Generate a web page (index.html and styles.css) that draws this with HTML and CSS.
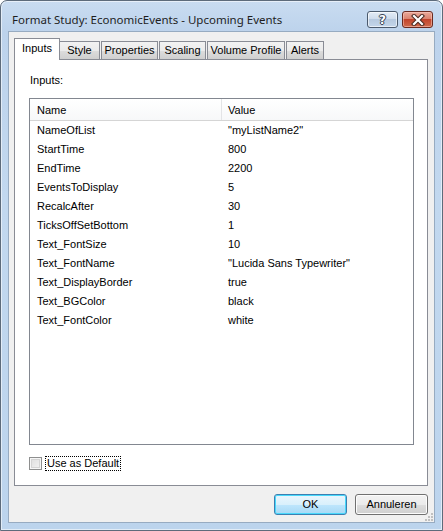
FILE: index.html
```html
<!DOCTYPE html>
<html>
<head>
<meta charset="utf-8">
<link rel="stylesheet" href="styles.css">
</head>
<body>
<div class="window">
  <div class="titlebar">
    <div class="title">Format Study: EconomicEvents - Upcoming Events</div>
    <div class="caption-buttons">
      <div class="cap-btn help"><span>?</span></div>
      <div class="cap-btn close">
        <svg width="18" height="12" viewBox="0 0 18 12">
          <path d="M5 2 L13 10 M13 2 L5 10" stroke="#4a2a22" stroke-width="4.2" stroke-linecap="square" fill="none"/>
          <path d="M5 2 L13 10 M13 2 L5 10" stroke="#ffffff" stroke-width="2.2" stroke-linecap="square" fill="none"/>
        </svg>
      </div>
    </div>
  </div>
  <div class="client">
    <div class="tabs">
      <div class="tab selected w-inputs">Inputs</div>
      <div class="tab w-style">Style</div>
      <div class="tab w-props">Properties</div>
      <div class="tab w-scaling">Scaling</div>
      <div class="tab w-vp">Volume Profile</div>
      <div class="tab w-alerts">Alerts</div>
    </div>
    <div class="panel">
      <div class="panel-label">Inputs:</div>
      <div class="listbox">
        <div class="row header">
          <div class="c-name">Name</div>
          <div class="c-value">Value</div>
        </div>
        <div class="row"><div class="c-name">NameOfList</div><div class="c-value">"myListName2"</div></div>
        <div class="row"><div class="c-name">StartTime</div><div class="c-value">800</div></div>
        <div class="row"><div class="c-name">EndTime</div><div class="c-value">2200</div></div>
        <div class="row"><div class="c-name">EventsToDisplay</div><div class="c-value">5</div></div>
        <div class="row"><div class="c-name">RecalcAfter</div><div class="c-value">30</div></div>
        <div class="row"><div class="c-name">TicksOffSetBottom</div><div class="c-value">1</div></div>
        <div class="row"><div class="c-name">Text_FontSize</div><div class="c-value">10</div></div>
        <div class="row"><div class="c-name">Text_FontName</div><div class="c-value">"Lucida Sans Typewriter"</div></div>
        <div class="row"><div class="c-name">Text_DisplayBorder</div><div class="c-value">true</div></div>
        <div class="row"><div class="c-name">Text_BGColor</div><div class="c-value">black</div></div>
        <div class="row"><div class="c-name">Text_FontColor</div><div class="c-value">white</div></div>
      </div>
      <div class="checkline">
        <div class="checkbox"></div>
        <div class="check-label">Use as Default</div>
      </div>
    </div>
    <div class="buttons">
      <div class="btn default">OK</div>
      <div class="btn">Annuleren</div>
    </div>
    <div class="grip">
      <svg width="8" height="8" viewBox="0 0 8 8">
        <rect x="6" y="0" width="2" height="2" fill="#c0c0c0"/>
        <rect x="3" y="3" width="2" height="2" fill="#c0c0c0"/>
        <rect x="6" y="3" width="2" height="2" fill="#c0c0c0"/>
        <rect x="0" y="6" width="2" height="2" fill="#c0c0c0"/>
        <rect x="3" y="6" width="2" height="2" fill="#c0c0c0"/>
        <rect x="6" y="6" width="2" height="2" fill="#c0c0c0"/>
      </svg>
    </div>
  </div>
</div>
</body>
</html>
```
FILE: styles.css
```css
html, body {
  margin: 0;
  padding: 0;
  background: #ffffff;
}
body {
  width: 443px;
  height: 531px;
  overflow: hidden;
  font-family: "Liberation Sans", Arial, sans-serif;
  font-size: 11px;
  color: #000;
}
.window {
  box-sizing: border-box;
  width: 443px;
  height: 531px;
  border: 1px solid #5d6b7b;
  border-radius: 7px 7px 0 0;
  background: linear-gradient(to bottom, #c9dcf1 0px, #bdd3ec 30px, #c2d8ef 200px, #bcd4ed 531px);
  display: flex;
  flex-direction: column;
  padding: 0 7px 7px 7px;
  box-shadow: inset 0 0 0 1px rgba(255,255,255,0.55);
}
.titlebar {
  height: 30px;
  display: flex;
  align-items: flex-start;
  justify-content: space-between;
  flex-shrink: 0;
}
.title {
  font-family: "Noto Sans", "Open Sans", sans-serif;
  font-size: 11.5px;
  color: #1e1e1e;
  margin-top: 11px;
  margin-left: 4px;
}
.caption-buttons {
  display: flex;
  margin-top: 10px;
  margin-right: 2px;
  gap: 4px;
}
.cap-btn {
  box-sizing: border-box;
  height: 17px;
  border: 1px solid #4b5a6d;
  border-radius: 3px;
  display: flex;
  align-items: center;
  justify-content: center;
}
.help {
  width: 31px;
  background: linear-gradient(to bottom, #e3ecf6 0%, #cfdcec 45%, #b6c9df 50%, #c4d6ea 100%);
  box-shadow: inset 0 0 0 1px rgba(255,255,255,0.6);
}
.help span {
  font-family: "DejaVu Sans", sans-serif;
  font-weight: bold;
  font-size: 12px;
  color: #ffffff;
  text-shadow: 0 0 1px #2a3648, 1px 0 0 #3a4658, -1px 0 0 #3a4658, 0 1px 0 #3a4658, 0 -1px 0 #3a4658;
  line-height: 12px;
}
.close {
  width: 31px;
  border-color: #6a2a20;
  background: linear-gradient(to bottom, #e9a99b 0%, #dc8470 45%, #c2442c 50%, #cf6a4c 100%);
  box-shadow: inset 0 0 0 1px rgba(255,210,200,0.5);
}
.client {
  flex: 1;
  background: #f0f0f0;
  border: 1px solid #97abc1;
  display: flex;
  flex-direction: column;
  padding: 6px 7px 0 5px;
  position: relative;
}
.tabs {
  display: flex;
  align-items: flex-end;
  height: 21px;
  position: relative;
  z-index: 2;
}
.tab {
  box-sizing: border-box;
  height: 18px;
  border: 1px solid #898c95;
  border-bottom: none;
  background: linear-gradient(to bottom, #f2f2f2 0%, #ebebeb 50%, #dddddd 51%, #cfcfcf 100%);
  text-align: center;
  line-height: 17px;
  margin-right: 1px;
  white-space: nowrap;
}
.tab.selected {
  background: #ffffff;
  line-height: 19px;
  margin-right: -1px;
  margin-bottom: -1px;
  height: 22px;
}
.w-inputs { width: 46px; }
.w-style { width: 41px; }
.w-props { width: 57px; }
.w-scaling { width: 47px; }
.w-vp { width: 78px; }
.w-alerts { width: 38px; }
.panel {
  box-sizing: border-box;
  width: 414px;
  height: 427px;
  border: 1px solid #898c95;
  background: #ffffff;
  display: flex;
  flex-direction: column;
  padding: 13px 13px 0 14px;
}
.panel-label {
  height: 14px;
  line-height: 14px;
  padding-left: 1px;
}
.listbox {
  box-sizing: border-box;
  margin-top: 11px;
  height: 347px;
  border: 1px solid #828790;
  background: #ffffff;
}
.row {
  display: flex;
  height: 19px;
  line-height: 19px;
}
.row.header {
  height: 22px;
  line-height: 22px;
  background: linear-gradient(to bottom, #ffffff 0%, #f7f8f9 100%);
  border-bottom: 1px solid #d5d5d5;
  box-sizing: border-box;
}
.c-name {
  width: 192px;
  padding-left: 7px;
  box-sizing: border-box;
}
.c-value {
  padding-left: 6px;
}
.row.header .c-name {
  border-right: 1px solid #e3e4e6;
}
.checkline {
  display: flex;
  align-items: center;
  margin-top: 11px;
  height: 15px;
}
.checkbox {
  box-sizing: border-box;
  width: 13px;
  height: 13px;
  border: 1px solid #8e8f8f;
  background: linear-gradient(135deg, #dcdcdc 0%, #f4f4f4 100%);
  box-shadow: inset 0 0 0 1px #f6f6f6, inset 0 0 0 2px #d4d4d4;
}
.check-label {
  margin-left: 3px;
  border: 1px dotted #000;
  padding: 0 1px;
  line-height: 13px;
}
.buttons {
  display: flex;
  justify-content: flex-end;
  gap: 8px;
  margin-top: 8px;
  width: 414px;
}
.btn {
  box-sizing: border-box;
  width: 73px;
  height: 21px;
  border: 1px solid #707070;
  border-radius: 3px;
  background: linear-gradient(to bottom, #f2f2f2 0%, #ebebeb 50%, #dddddd 51%, #cfcfcf 100%);
  box-shadow: inset 0 0 0 1px #fcfcfc;
  text-align: center;
  line-height: 19px;
}
.btn.default {
  border-color: #3c7fb1;
  box-shadow: inset 0 0 0 1px #48d8fb;
  background: linear-gradient(to bottom, #eaf6fd 0%, #d9f0fc 50%, #bee6fd 51%, #a7d9f5 100%);
}
.grip {
  position: absolute;
  right: 1px;
  bottom: 1px;
  width: 8px;
  height: 8px;
  line-height: 0;
}
```
